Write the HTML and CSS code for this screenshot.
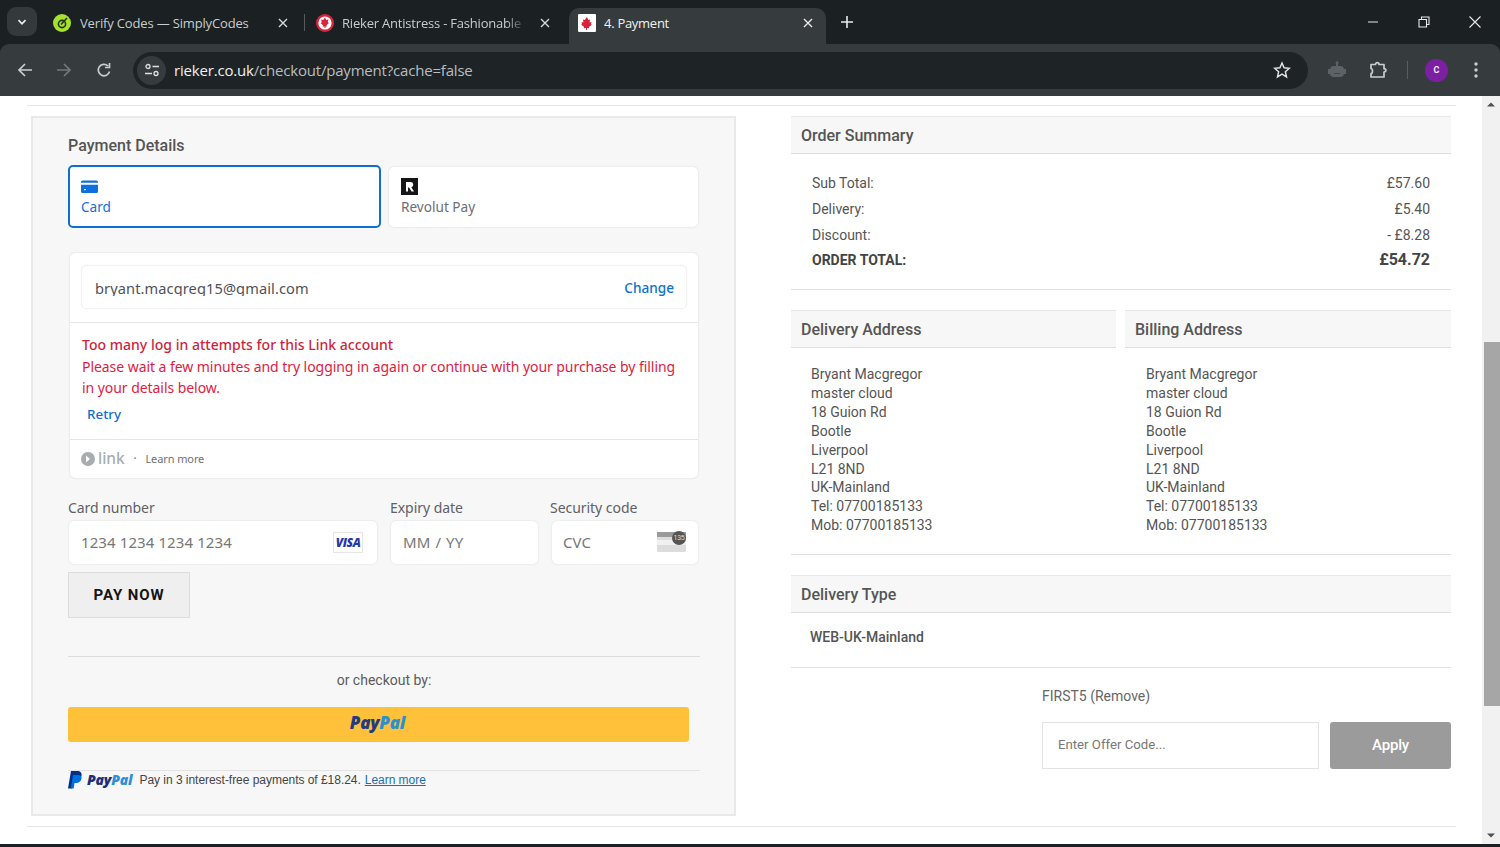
FILE: index.html
```html
<!DOCTYPE html>
<html lang="en">
<head>
<meta charset="utf-8">
<title>4. Payment</title>
<link rel="stylesheet" href="styles.css">
</head>
<body>
<header class="chrome">
  <div class="tabstrip">
    <div class="tab-search"><svg width="12" height="12" viewBox="0 0 12 12"><path d="M2.500 4.200 6 7.800l3.500-3.600" fill="none" stroke="#e8eaed" stroke-width="1.800"/></svg></div>
    <div class="tab tab-one">
      <svg class="fav" width="18" height="18" viewBox="0 0 18 18"><circle cx="9" cy="9" r="9" fill="#a6e22e"/><circle cx="9" cy="10" r="3.600" fill="none" stroke="#26331a" stroke-width="1.600"/><path d="M8 10.500 14 4" stroke="#26331a" stroke-width="1.600"/></svg>
      <span class="tab-title">Verify Codes — SimplyCodes</span>
      <svg class="x" width="10" height="10" viewBox="0 0 10 10"><path d="M1 1l8 8M9 1 1 9" stroke="#d5d8da" stroke-width="1.400"/></svg>
    </div>
    <i class="tab-sep"></i>
    <div class="tab tab-two">
      <svg class="fav" width="18" height="18" viewBox="0 0 18 18"><circle cx="9" cy="9" r="9" fill="#d8243c"/><circle cx="9" cy="9" r="6.600" fill="#fff"/><path d="M9 3.500 10.300 6l2-.6-.5 3 1.200.6-2.500 2.300.3 1.200H9.500V14h-1v-1.500H6.700l.3-1.200L4.500 9l1.200-.6-.5-3 2 .6z" fill="#d8243c"/></svg>
      <span class="tab-title fade">Rieker Antistress - Fashionable shoes</span>
      <svg class="x" width="10" height="10" viewBox="0 0 10 10"><path d="M1 1l8 8M9 1 1 9" stroke="#d5d8da" stroke-width="1.400"/></svg>
    </div>
    <div class="tab tab-active">
      <svg class="fav" width="18" height="18" viewBox="0 0 18 18"><rect width="18" height="18" rx="1" fill="#fff"/><path d="M9 3 10.300 6l1.700-.6-.4 3 1.900-.4-.6 2 1 .6-3 2.500.4 1.200-2.300-.4V16h-1v-2.100l-2.300.4.400-1.200-3-2.500 1-.6-.6-2 1.900.4-.4-3 1.700.6z" fill="#d8213a"/></svg>
      <span class="tab-title active-title">4. Payment</span>
      <svg class="x" width="10" height="10" viewBox="0 0 10 10"><path d="M1 1l8 8M9 1 1 9" stroke="#e8eaed" stroke-width="1.400"/></svg>
    </div>
    <svg class="newtab" width="12" height="12" viewBox="0 0 12 12"><path d="M6 0v12M0 6h12" stroke="#e8eaed" stroke-width="1.600"/></svg>
    <div class="winctl">
      <svg width="12" height="12" viewBox="0 0 12 12"><path d="M1 6h10" stroke="#d5d8da" stroke-width="1.100"/></svg>
      <svg width="12" height="12" viewBox="0 0 12 12"><path d="M1 3.500h7.500V11H1zM3.500 3.500V1H11v7.500H8.500" fill="none" stroke="#e8eaed" stroke-width="1.100"/></svg>
      <svg width="12" height="12" viewBox="0 0 12 12"><path d="M.5.500l11 11M11.500.500l-11 11" stroke="#e8eaed" stroke-width="1.100"/></svg>
    </div>
  </div>
  <div class="toolbar">
    <svg class="nav" width="16" height="16" viewBox="0 0 16 16"><path d="M15 8H2M8 2 2 8l6 6" fill="none" stroke="#c9cdd0" stroke-width="1.700"/></svg>
    <svg class="nav" width="16" height="16" viewBox="0 0 16 16"><path d="M1 8h13M8 2l6 6-6 6" fill="none" stroke="#73787b" stroke-width="1.700"/></svg>
    <svg class="nav" width="16" height="16" viewBox="0 0 16 16"><path d="M13.500 9.500A5.700 5.700 0 1 1 12 4M13.500 1v4.500H9" fill="none" stroke="#c9cdd0" stroke-width="1.700"/></svg>
    <div class="omnibox">
      <div class="site-btn"><svg width="16" height="14" viewBox="0 0 16 14"><circle cx="4" cy="3.500" r="2" fill="none" stroke="#dfe1e3" stroke-width="1.300"/><path d="M8.500 3.500H15M1 10.500h7" stroke="#dfe1e3" stroke-width="1.300"/><circle cx="12" cy="10.500" r="2" fill="none" stroke="#dfe1e3" stroke-width="1.300"/></svg></div>
      <span class="url"><b>rieker.co.uk</b>/checkout/payment?cache=false</span>
      <svg class="star" width="18" height="18" viewBox="0 0 18 18"><path d="m9 2 2.100 4.800 5.200.5-3.900 3.500 1.100 5.100L9 13.200l-4.500 2.700 1.100-5.100-3.900-3.500 5.200-.5z" fill="none" stroke="#dfe1e3" stroke-width="1.500"/></svg>
    </div>
    <div class="tool-icons">
      <svg width="18" height="18" viewBox="0 0 18 18"><rect x="2" y="5" width="14" height="11" rx="4" fill="#5c6265"/><rect x="8" y="1" width="2" height="4" fill="#5c6265"/><circle cx="9" cy="1.800" r="1.500" fill="#5c6265"/><rect x="0" y="8" width="2" height="5" fill="#5c6265"/><rect x="16" y="8" width="2" height="5" fill="#5c6265"/><path d="M6 12.500h6" stroke="#3f4547" stroke-width="1"/></svg>
      <svg width="18" height="18" viewBox="0 0 18 18"><path d="M2 3.500h4.500C6.500 1 10 1 10 3.500h5v4.200c2.500 0 2.500 3.300 0 3.300V16H2v-3.500c2 0 2-5 0-5z" fill="none" stroke="#c9cdd0" stroke-width="1.700" stroke-linejoin="round"/></svg>
      <i class="tool-sep"></i>
      <span class="avatar">C</span>
      <svg width="4" height="16" viewBox="0 0 4 16"><circle cx="2" cy="2" r="1.700" fill="#c9cdd0"/><circle cx="2" cy="8" r="1.700" fill="#c9cdd0"/><circle cx="2" cy="14" r="1.700" fill="#c9cdd0"/></svg>
    </div>
  </div>
</header>

<div class="viewport">
  <main class="page">
    <hr class="page-rule top-rule">
    <div class="columns">
      <section class="pay-panel">
        <h2 class="pay-title">Payment Details</h2>
        <div class="methods">
          <div class="method method-on">
            <svg width="17" height="13" viewBox="0 0 17 13"><path d="M0 2a1.500 1.500 0 0 1 1.500-1.500h14A1.500 1.500 0 0 1 17 2v.8H0zM0 4.800h17v6.700a1.500 1.500 0 0 1-1.500 1.500h-14A1.500 1.500 0 0 1 0 11.500z" fill="#0f6fde"/><rect x="3" y="9" width="2" height="1.200" fill="#fff"/></svg>
            <span>Card</span>
          </div>
          <div class="method method-off">
            <svg width="17" height="17" viewBox="0 0 17 17"><rect width="17" height="17" fill="#151515"/><path d="M5 4h4.500a2.700 2.700 0 0 1 .8 5.300L13 13.500h-2.400L8 9.500H7V13.500H5z" fill="#fff"/></svg>
            <span>Revolut Pay</span>
          </div>
        </div>
        <div class="linkbox">
          <div class="link-account">
            <div class="email-field">
              <span class="email">bryant.macgreg15@gmail.com</span>
              <span class="change">Change</span>
            </div>
          </div>
          <div class="link-error">
            <strong>Too many log in attempts for this Link account</strong>
            <p>Please wait a few minutes and try logging in again or continue with your purchase by filling in your details below.</p>
            <a class="retry">Retry</a>
          </div>
          <div class="link-foot">
            <svg width="14" height="14" viewBox="0 0 14 14"><circle cx="7" cy="7" r="7" fill="#a8acaf"/><path d="M5 3.500 9 7l-4 3.500z" fill="#fff"/></svg>
            <span class="link-word">link</span>
            <span class="dot">•</span>
            <span class="learn">Learn more</span>
          </div>
        </div>
        <div class="card-fields">
          <div class="field f-num">
            <label>Card number</label>
            <div class="input"><span>1234 1234 1234 1234</span><span class="visa">VISA</span></div>
          </div>
          <div class="field f-exp">
            <label>Expiry date</label>
            <div class="input"><span>MM / YY</span></div>
          </div>
          <div class="field f-cvc">
            <label>Security code</label>
            <div class="input"><span>CVC</span>
              <svg width="29" height="20" viewBox="0 0 29 20"><rect width="29" height="20" rx="1.500" fill="#dcdcdc"/><rect width="29" height="5" fill="#9a9a9a"/><rect y="8" width="29" height="5" fill="#f0f0f0"/></svg>
              <b class="cvc-badge">135</b>
            </div>
          </div>
        </div>
        <button class="pay-now" type="button">PAY NOW</button>
        <hr class="panel-rule rule-a">
        <p class="or">or checkout by:</p>
        <div class="paypal-btn"><span class="pp"><b>Pay</b><em>Pal</em></span></div>
        <hr class="panel-rule rule-b">
        <div class="pp-msg">
          <svg width="14" height="18" viewBox="0 0 14 18"><path d="M3 0h6c3.500 0 5 2 4.500 4.800C13 8.200 10.500 10 7.500 10H5.200L4 17.500H0z" fill="#003087"/><path d="M5 4h5c2.500 0 4 1.500 3.500 3.800-.5 2.700-2.700 4.200-5.200 4.200H6.500l-.8 5.500H2.800z" fill="#0070e0"/></svg>
          <span class="pp pp-small"><b>Pay</b><em>Pal</em></span>
          <span class="pp-text">Pay in 3 interest-free payments of £18.24.</span>
          <a class="pp-learn">Learn more</a>
        </div>
      </section>

      <aside class="summary">
        <h3 class="head">Order Summary</h3>
        <dl class="totals">
          <div><dt>Sub Total:</dt><dd>£57.60</dd></div>
          <div><dt>Delivery:</dt><dd>£5.40</dd></div>
          <div><dt>Discount:</dt><dd>- £8.28</dd></div>
          <div class="grand"><dt>ORDER TOTAL:</dt><dd>£54.72</dd></div>
        </dl>
        <hr class="side-rule">
        <div class="addresses">
          <div class="addr-col">
            <h3 class="head">Delivery Address</h3>
            <address>Bryant Macgregor<br>master cloud<br>18 Guion Rd<br>Bootle<br>Liverpool<br>L21 8ND<br>UK-Mainland<br>Tel: 07700185133<br>Mob: 07700185133</address>
          </div>
          <div class="addr-col">
            <h3 class="head">Billing Address</h3>
            <address>Bryant Macgregor<br>master cloud<br>18 Guion Rd<br>Bootle<br>Liverpool<br>L21 8ND<br>UK-Mainland<br>Tel: 07700185133<br>Mob: 07700185133</address>
          </div>
        </div>
        <hr class="side-rule rule-addr">
        <h3 class="head">Delivery Type</h3>
        <p class="dtype">WEB-UK-Mainland</p>
        <hr class="side-rule rule-type">
        <div class="offer">
          <p class="applied">FIRST5 (Remove)</p>
          <div class="offer-row">
            <div class="offer-input">Enter Offer Code...</div>
            <button class="apply" type="button">Apply</button>
          </div>
        </div>
      </aside>
    </div>
    <hr class="page-rule bottom-rule">
  </main>
  <div class="scrollbar">
    <svg width="18" height="17" viewBox="0 0 18 17"><path d="m5 10.500 4-4 4 4z" fill="#505050"/></svg>
    <div class="track"><div class="thumb"></div></div>
    <svg width="18" height="17" viewBox="0 0 18 17"><path d="m5 6.500 4 4 4-4z" fill="#505050"/></svg>
  </div>
</div>
<div class="taskbar"></div>
</body>
</html>
```
FILE: styles.css
```css
* { box-sizing: border-box; }
html, body { margin: 0; height: 847px; overflow: hidden; background: #fff; }
body { width: 1500px; display: flex; flex-direction: column; font-family: Roboto, "Liberation Sans", sans-serif; color: #555; }

/* browser chrome */
.chrome { height: 96px; flex: none; background: #1b2123; font-family: "Open Sans", "Noto Sans", sans-serif; }
.tabstrip { height: 44px; display: flex; align-items: center; }
.tab-search { width: 30px; height: 29px; margin-left: 7px; margin-top: -1px; border-radius: 9px; background: #34393c; display: flex; align-items: center; justify-content: center; flex: none; }
.tab { display: flex; align-items: center; height: 36px; margin-top: 8px; padding-bottom: 6px; flex: none; }
.tab-one { padding-left: 16px; }
.tab-two { margin-left: 0; }
.tab-active { width: 257px; margin-left: 19px; padding-left: 9px; background: #363c3e; border-radius: 10px 10px 0 0; }
.fav { flex: none; }
.tab-title { font-size: 13px; letter-spacing: -.16px; color: #c8ccce; margin-left: 9px; white-space: nowrap; overflow: hidden; }
.tab-one .tab-title { width: 198px; }
.tab-two .tab-title { width: 186px; margin-left: 8px; letter-spacing: -.2px; }
.fade { -webkit-mask-image: linear-gradient(90deg, #000 88%, transparent 99%); mask-image: linear-gradient(90deg, #000 88%, transparent 99%); }
.active-title { color: #f0f1f2; width: 199px; margin-left: 8px; letter-spacing: -.28px; }
.x { flex: none; }
.tab-two .x { margin-left: 12px; }
.tab-sep { width: 1px; height: 17px; background: #565c5e; flex: none; margin: 0 11px 0 16px; }
.newtab { margin-left: 15px; flex: none; }
.winctl { margin-left: auto; display: flex; gap: 39px; padding-right: 19px; margin-top: -1px; }
.toolbar { height: 52px; background: #363c3e; border-radius: 9px 9px 0 0; display: flex; align-items: center; padding-left: 17px; }
.nav { margin-right: 23px; flex: none; }
.nav:nth-of-type(2) { margin-right: 24px; }
.nav:nth-of-type(3) { margin-right: 21px; }
.omnibox { width: 1175px; height: 37px; border-radius: 19px; background: #1e2426; display: flex; align-items: center; padding: 0 17px 0 4px; flex: none; }
.site-btn { width: 29px; height: 29px; border-radius: 50%; background: #363c3e; display: flex; align-items: center; justify-content: center; flex: none; }
.url { margin-left: 8px; font-size: 15px; letter-spacing: -.19px; color: #b9bdc0; white-space: nowrap; flex: 1; }
.url b { font-weight: 400; color: #eef0f1; }
.star { flex: none; }
.tool-icons { display: flex; align-items: center; margin-left: 20px; }
.tool-icons > svg:nth-child(1) { margin-right: 23px; }
.tool-sep { width: 1px; height: 18px; background: #585e60; margin: 0 17px 0 20px; }
.tool-icons > svg:last-child { margin-left: 26px; }
.avatar { width: 23px; height: 23px; border-radius: 50%; background: #7c1fa3; color: #eee; font: 700 9px/23px Roboto, sans-serif; text-align: center; }

/* page */
.viewport { height: 748px; flex: none; display: flex; overflow: hidden; background: #fff; }
.page { width: 1482px; flex: none; padding: 9px 0 0 27px; }
.page-rule { margin: 0; border: 0; height: 1px; width: 1429px; background: #e4e4e4; }
.columns { display: flex; margin: 10px 0 10px 4px; height: 700px; }
.pay-panel { width: 705px; height: 700px; flex: none; background: #f7f7f7; border: 2px solid #e9e9e9; padding: 0 0 0 35px; }
.pay-title { margin: 18px 0 11px; font: 500 16px/19px Roboto, sans-serif; color: #555; }
.methods { display: flex; gap: 8px; width: 630px; height: 62px; font-family: "Noto Sans", "Open Sans", sans-serif; font-size: 13.600px; }
.method { background: #fff; border-radius: 5px; display: flex; flex-direction: column; align-items: flex-start; gap: 2px; }
.method-off { height: 60px; flex: 1; margin-top: 1px; box-shadow: 0 0 2px rgba(0,0,0,.16); padding: 11px 12px; color: #6d6e78; }
.method-on { flex: none; width: 313px; height: 63px; margin-top: -1px; border: 2px solid #0f6fd1; color: #0f6fde; padding: 12px 11px 0; }
.method-on svg { margin: 1px 0 2px; }
.method span { line-height: 19px; }
.linkbox { width: 628px; height: 225px; margin: 25px 0 0 2px; background: #fff; border-radius: 5px; box-shadow: 0 0 2px rgba(0,0,0,.16); font-family: "Noto Sans", "Open Sans", sans-serif; display: flex; flex-direction: column; }
.link-account { height: 69px; padding: 13px 12px; box-shadow: 0 1px 0 #e6e6e6; flex: none; }
.email-field { height: 42px; border-radius: 4px; box-shadow: 0 0 2px rgba(0,0,0,.2); display: flex; justify-content: space-between; align-items: center; padding: 0 12px 0 13px; }
.email { font-size: 14.600px; letter-spacing: .1px; color: #50525a; height: 20px; line-height: 24px; overflow: hidden; margin-top: -2px; }
.change { color: #0f6fcc; font-size: 13.600px; font-weight: 500; }
.link-error { height: 117px; padding: 13px 12px 0; box-shadow: 0 1px 0 #e6e6e6; font-size: 14px; flex: none; }
.link-error strong { display: block; font-weight: 500; line-height: 20px; letter-spacing: .02px; color: #cf1f3e; }
.link-error p { margin: 1px 0 0; line-height: 21px; width: 605px; letter-spacing: -.055px; color: #df1b41; }
.retry { display: block; margin: 6px 0 0 5px; color: #0f6fcc; font-weight: 500; font-size: 13.400px; line-height: 20px; }
.link-foot { flex: 1; display: flex; align-items: center; padding-left: 11px; color: #777; }
.link-word { font: 500 15.500px/1 "Noto Sans", sans-serif; color: #a8acaf; margin-left: 3px; }
.dot { font-size: 7px; color: #8a8a8a; margin: 0 9px; }
.learn { font-size: 11px; color: #6f7075; letter-spacing: -.1px; }
.card-fields { display: flex; width: 631px; margin-top: 20px; font-family: "Noto Sans", "Open Sans", sans-serif; }
.field label { display: block; font-size: 14px; line-height: 20px; letter-spacing: -.04px; color: #5f6068; margin-bottom: 3px; }
.f-num { width: 310px; margin-right: 12px; }
.f-exp { width: 148px; margin-right: 12px; }
.f-cvc { width: 149px; }
.input { height: 43px; background: #fff; border-radius: 5px; box-shadow: 0 0 2px rgba(0,0,0,.14); display: flex; align-items: center; justify-content: space-between; padding: 0 12px 1px; font-size: 15px; color: #777; letter-spacing: .1px; position: relative; }
.f-num .input { margin-left: 1px; padding-right: 14px; width: 308px; }
.f-exp .input { margin-left: 1px; width: 147px; word-spacing: 1px; }
.f-cvc .input { margin-left: 2px; width: 146px; padding: 0 12px 1px 11px; }
.visa { width: 30px; height: 21px; border: 1px solid #e6e6e6; font: italic 800 12px/19px "Open Sans", sans-serif; color: #2438a8; text-align: center; letter-spacing: -.4px; }
.cvc-badge { position: absolute; right: 12px; top: 10px; width: 14px; height: 14px; border-radius: 50%; background: #555; color: #ddd; font: 400 7px/14px Roboto, sans-serif; text-align: center; letter-spacing: -.3px; }
.pay-now { display: block; width: 122px; height: 46px; margin-top: 8px; background: #efefef; border: 1px solid #dcdcdc; font: 700 15px/1 Roboto, sans-serif; letter-spacing: .9px; color: #151515; padding: 0; }
.panel-rule { margin: 0; border: 0; height: 1px; width: 632px; background: #dcdcdc; }
.rule-a { margin-top: 38px; }
.or { margin: 15px 0 0; width: 632px; text-align: center; font-size: 14px; line-height: 17px; color: #5c5c5c; }
.paypal-btn { width: 621px; height: 35px; margin-top: 18px; padding: 0 2px 4px 0; background: #ffc139; border-radius: 3px; display: flex; align-items: center; justify-content: center; }
.pp { font: italic 800 17px/1 "Open Sans", "Liberation Sans", sans-serif; letter-spacing: -.2px; }
.pp b { color: #253b80; font-weight: 800; }
.pp em { color: #2c90d0; font-style: italic; }
.rule-b { margin-top: 28px; background: #e3e3e3; }
.pp-msg { display: flex; align-items: center; height: 18px; font: 12px/18px "Liberation Sans", Arial, sans-serif; letter-spacing: -.035px; color: #444; }
.pp-small { font-size: 14px; margin-left: 5px; margin-right: 7px; }
.pp-small b { color: #1c2f78; }
.pp-small em { color: #2f8fd6; }
.pp-learn { margin-left: 4px; color: #1a6fb0; text-decoration: underline; }

.summary { width: 660px; margin-left: 55px; flex: none; }
.head { margin: 0; height: 38px; padding-left: 10px; background: #f7f7f7; border-top: 1px solid #e8e8e8; border-bottom: 1px solid #dedede; font: 500 16px/37px Roboto, sans-serif; color: #555; }
.totals { margin: 16px 0 0; padding: 0 21px; font-size: 14px; color: #555; }
.totals div { display: flex; justify-content: space-between; height: 26px; line-height: 26px; }
.totals dt, .totals dd { margin: 0; }
.grand { font-weight: 700; color: #444; margin-top: -1px; }
.grand dd { font-size: 16px; }
.side-rule { margin: 0; border: 0; height: 1px; background: #e2e2e2; }
.totals + .side-rule { margin-top: 16px; }
.addresses { display: flex; gap: 9px; margin-top: 20px; }
.addr-col { width: 325px; flex: none; }
.addr-col:last-child { width: 326px; }
address { font-style: normal; font-size: 14px; line-height: 18.900px; color: #555; padding: 17px 0 0 20px; }
.addr-col:last-child address { padding-left: 21px; }
.rule-addr { margin-top: 19px; margin-bottom: 20px; }
.dtype { margin: 0; height: 54px; padding: 15px 0 0 19px; font-size: 14px; font-weight: 500; line-height: 18px; color: #555; }
.rule-type { margin: 0; }
.offer { padding-left: 251px; }
.applied { margin: 19px 0 0; font-size: 14px; line-height: 18px; color: #666; }
.offer-row { display: flex; gap: 11px; margin-top: 17px; }
.offer-input { width: 277px; height: 47px; border: 1px solid #e3e3e3; background: #fff; padding-left: 15px; font-size: 13.200px; line-height: 43px; color: #777; }
.apply { width: 121px; height: 47px; background: #9b9b9b; border: 0; border-radius: 3px; color: #fff; font: 500 15px/1 Roboto, sans-serif; letter-spacing: -.2px; padding: 0; }

.scrollbar { width: 18px; flex: none; background: #f1f1f1; display: flex; flex-direction: column; }
.scrollbar svg { flex: none; }
.track { flex: 1; position: relative; }
.thumb { position: absolute; left: 2px; right: 0; top: 229px; height: 364px; background: #a6a6a6; }
.taskbar { height: 3px; flex: none; background: #1d2022; }
```
